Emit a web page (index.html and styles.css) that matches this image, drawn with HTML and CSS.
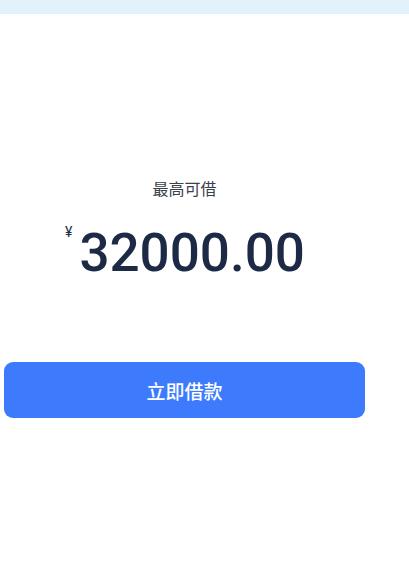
FILE: index.html
```html
<!DOCTYPE html>
<html lang="zh">
<head>
<meta charset="utf-8">
<link rel="stylesheet" href="styles.css">
</head>
<body>
<div class="topbar"></div>
<main class="page">
  <section class="quota">
    <div class="quota-label">最高可借</div>
    <div class="quota-amount"><span class="currency">¥</span><span class="value">32000.00</span></div>
  </section>
  <button class="borrow-btn">立即借款</button>
</main>
</body>
</html>
```

FILE: styles.css
```css
html, body {
  margin: 0;
  padding: 0;
  background: #ffffff;
}
body {
  font-family: Roboto, "Noto Sans CJK SC", sans-serif;
}
.topbar {
  height: 14px;
  background: #e1f2fd;
}
.page {
  width: 369px;
  display: flex;
  flex-direction: column;
  align-items: center;
}
.quota {
  display: flex;
  flex-direction: column;
  align-items: center;
  padding-top: 165px;
}
.quota-label {
  font-size: 16px;
  line-height: 22px;
  color: #3b404b;
}
.quota-amount {
  display: flex;
  align-items: flex-start;
  margin-top: 20px;
  padding-left: 1px;
  color: #1d2a45;
}
.currency {
  font-size: 14px;
  line-height: 16px;
  margin-top: 3px;
  margin-right: 7px;
}
.value {
  font-size: 53px;
  line-height: 64px;
  font-weight: 500;
}
.borrow-btn {
  align-self: stretch;
  margin: 77px 4px 0;
  height: 56px;
  border: none;
  border-radius: 9px;
  background: #3d7bfc;
  color: #ffffff;
  font-family: "Noto Sans CJK SC", sans-serif;
  font-size: 19px;
  font-weight: 500;
  padding: 0;
}
```
